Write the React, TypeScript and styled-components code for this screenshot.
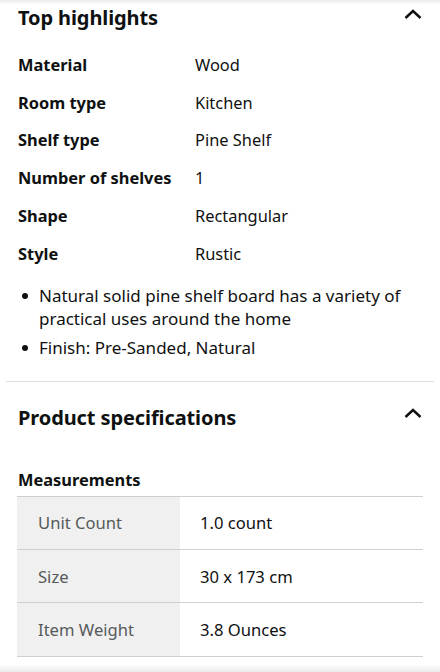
import React from "react";
import styled, { createGlobalStyle } from "styled-components";

const Global = createGlobalStyle`
  html, body { margin: 0; padding: 0; background: #fff; }
  body { font-family: "Noto Sans", "Open Sans", Arial, sans-serif; color: #0f1111; }
`;

const Page = styled.div`
  width: 440px;
  height: 672px;
  overflow: hidden;
  display: flex;
  flex-direction: column;
  background: linear-gradient(#ececec 0px, #fff 5px);
`;

const Section = styled.section<{ $top: number }>`
  padding: ${(p) => p.$top}px 18px 0 18px;
  display: flex;
  flex-direction: column;
`;

const Header = styled.div`
  display: flex;
  align-items: center;
  justify-content: space-between;
  height: 28px;
`;

const Title = styled.h2`
  margin: 0;
  font-size: 20px;
  font-weight: 700;
  line-height: 28px;
  letter-spacing: -0.1px;
`;

const Chevron = styled.svg`
  width: 18px;
  height: 10px;
  margin-top: -9px;
`;

const Grid = styled.div`
  display: grid;
  grid-template-columns: 177px 1fr;
  margin-top: 14px;
`;

const Cell = styled.div<{ $bold?: boolean }>`
  font-size: 16.4px;
  line-height: 22px;
  padding: 7.9px 0;
  font-weight: ${(p) => (p.$bold ? 700 : 400)};
`;

const Bullets = styled.ul`
  margin: 11px 0 0 0;
  padding: 0 0 0 21px;
  list-style: none;
`;

const Bullet = styled.li`
  position: relative;
  font-size: 17px;
  line-height: 23px;
  margin-bottom: 6px;
  &::before {
    content: "";
    position: absolute;
    left: -17px;
    top: 9px;
    width: 6px;
    height: 6px;
    border-radius: 50%;
    background: #0f1111;
  }
`;

const Divider = styled.hr`
  border: none;
  height: 1px;
  background: #dddddd;
  margin: 16px 6px 0 6px;
`;

const SubTitle = styled.h3`
  margin: 37px 0 0 0;
  font-size: 16.4px;
  font-weight: 700;
  line-height: 22px;
`;

const Table = styled.div`
  margin-top: 5px;
  display: flex;
  flex-direction: column;
  border-bottom: 1px solid #cfcfcf;
  margin-right: -1px;
  margin-left: -1px;
`;

const TRow = styled.div`
  display: grid;
  grid-template-columns: 163px 1fr;
  height: 53.3px;
  border-top: 1px solid #cfcfcf;
  box-sizing: border-box;
`;

const TKey = styled.div`
  background: #f0f0f0;
  color: #555a5a;
  font-size: 16.6px;
  display: flex;
  align-items: center;
  padding-left: 21px;
`;

const TVal = styled.div`
  font-size: 16.6px;
  display: flex;
  align-items: center;
  padding-left: 20px;
`;

const BottomBar = styled.div`
  margin-top: auto;
  height: 6px;
  background: linear-gradient(#fafafa, #ececec);
`;

const ChevronUp = () => (
  <Chevron viewBox="0 0 18 10">
    <path d="M1.5 9 L9 2 L16.5 9" fill="none" stroke="#0f1111" strokeWidth="2.4" />
  </Chevron>
);

const highlights: [string, string][] = [
  ["Material", "Wood"],
  ["Room type", "Kitchen"],
  ["Shelf type", "Pine Shelf"],
  ["Number of shelves", "1"],
  ["Shape", "Rectangular"],
  ["Style", "Rustic"],
];

const specs: [string, string][] = [
  ["Unit Count", "1.0 count"],
  ["Size", "30 x 173 cm"],
  ["Item Weight", "3.8 Ounces"],
];

export default function App() {
  return (
    <>
      <Global />
      <Page>
        <Section $top={4}>
          <Header>
            <Title>Top highlights</Title>
            <ChevronUp />
          </Header>
          <Grid>
            {highlights.map(([k, v]) => (
              <React.Fragment key={k}>
                <Cell $bold>{k}</Cell>
                <Cell>{v}</Cell>
              </React.Fragment>
            ))}
          </Grid>
          <Bullets>
            <Bullet>Natural solid pine shelf board has a variety of practical uses around the home</Bullet>
            <Bullet>Finish: Pre-Sanded, Natural</Bullet>
          </Bullets>
        </Section>
        <Divider />
        <Section $top={22}>
          <Header>
            <Title>Product specifications</Title>
            <ChevronUp />
          </Header>
          <SubTitle>Measurements</SubTitle>
          <Table>
            {specs.map(([k, v]) => (
              <TRow key={k}>
                <TKey>{k}</TKey>
                <TVal>{v}</TVal>
              </TRow>
            ))}
          </Table>
        </Section>
        <BottomBar />
      </Page>
    </>
  );
}
